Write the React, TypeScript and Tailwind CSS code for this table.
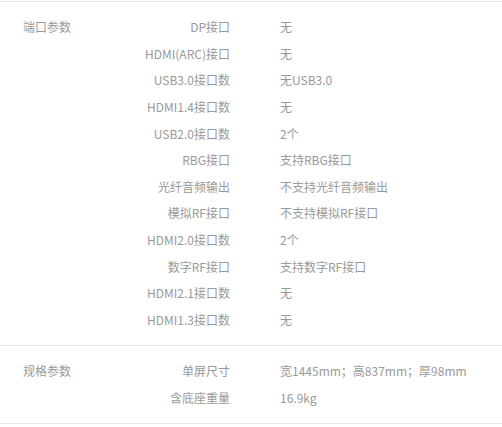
const sections = [
  {
    title: '端口参数',
    rows: [
      ['DP接口', '无'],
      ['HDMI(ARC)接口', '无'],
      ['USB3.0接口数', '无USB3.0'],
      ['HDMI1.4接口数', '无'],
      ['USB2.0接口数', '2个'],
      ['RBG接口', '支持RBG接口'],
      ['光纤音频输出', '不支持光纤音频输出'],
      ['模拟RF接口', '不支持模拟RF接口'],
      ['HDMI2.0接口数', '2个'],
      ['数字RF接口', '支持数字RF接口'],
      ['HDMI2.1接口数', '无'],
      ['HDMI1.3接口数', '无'],
    ],
  },
  {
    title: '规格参数',
    rows: [
      ['单屏尺寸', '宽1445mm；高837mm；厚98mm'],
      ['含底座重量', '16.9kg'],
    ],
  },
];

export default function App() {
  return (
    <div className="w-[502px] h-[427px] bg-white pt-px text-[12px] text-[#999] font-['Microsoft_YaHei','Noto_Sans_CJK_SC',sans-serif]">
      <div className="border-t border-[#e8e8e8]">
        {sections.map((s) => (
          <div key={s.title} className="flex border-b border-[#e8e8e8] pt-3 pb-3">
            <div className="w-[100px] pl-[23px] leading-[26.6px]">{s.title}</div>
            <div className="flex-1">
              {s.rows.map(([k, v]) => (
                <div key={k} className="flex h-[26.6px] items-center">
                  <div className="w-[130px] text-right">{k}</div>
                  <div className="pl-[50px]">{v}</div>
                </div>
              ))}
            </div>
          </div>
        ))}
      </div>
    </div>
  );
}
